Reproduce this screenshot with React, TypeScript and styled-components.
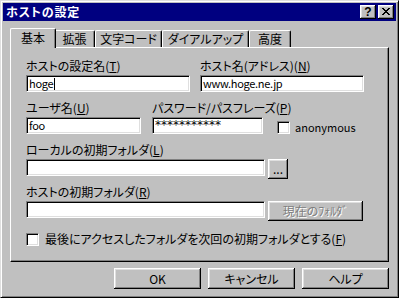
import React from 'react';
import styled, { createGlobalStyle } from 'styled-components';

const GlobalStyle = createGlobalStyle`
  html, body { margin: 0; padding: 0; background: #c0c0c0; }
  body {
    font-family: "Noto Sans CJK JP", "Noto Sans", sans-serif;
    font-size: 12px;
    font-feature-settings: "palt";
    color: #000;
  }
  * { box-sizing: border-box; }
`;

const Window = styled.div`
  width: 399px;
  height: 298px;
  background: #c0c0c0;
  border-top: 1px solid #dfdfdf;
  border-left: 1px solid #dfdfdf;
  border-right: 1px solid #000;
  border-bottom: 1px solid #000;
  box-shadow: inset 1px 1px #fff, inset -1px -1px #808080;
  padding: 2px;
  display: flex;
  flex-direction: column;
`;

const TitleBar = styled.div`
  height: 18px;
  background: #000080;
  display: flex;
  align-items: center;
  padding: 0 2px 0 2px;
`;

const TitleText = styled.div`
  flex: 1;
  color: #fff;
  font-weight: bold;
  font-size: 12px;
  line-height: 14px;
  padding-left: 1px;
  letter-spacing: 0.8px;
`;

const TitleButton = styled.div`
  width: 16px;
  height: 14px;
  margin-left: 2px;
  background: #c0c0c0;
  box-shadow: inset -1px -1px #000, inset 1px 1px #fff, inset -2px -2px #808080, inset 2px 2px #dfdfdf;
  display: flex;
  align-items: center;
  justify-content: center;
  font-family: "Liberation Sans", Arial, sans-serif;
  font-weight: bold;
  font-size: 12px;
  line-height: 12px;
  padding-bottom: 1px;
`;

const Body = styled.div`
  padding: 0 7px;
  display: flex;
  flex-direction: column;
`;

const TabStrip = styled.div`
  margin-top: 7px;
  height: 19px;
  display: flex;
  align-items: flex-end;
  padding-left: 2px;
`;

const Tab = styled.div<{ $w: number; $active?: boolean }>`
  width: ${(p) => (p.$active ? p.$w + 4 : p.$w)}px;
  height: ${(p) => (p.$active ? 20 : 17)}px;
  margin: ${(p) => (p.$active ? '0 -2px -1px -2px' : '0')};
  position: relative;
  z-index: ${(p) => (p.$active ? 2 : 1)};
  background: #c0c0c0;
  border-top: 1px solid #fff;
  border-left: 1px solid #fff;
  border-right: 1px solid #000;
  border-top-left-radius: 2px;
  border-top-right-radius: 2px;
  box-shadow: inset -1px 0 #808080;
  text-align: center;
  line-height: 14px;
  padding-top: ${(p) => (p.$active ? 2 : 1)}px;
  white-space: nowrap;
`;

const Panel = styled.div`
  height: 215px;
  border-top: 1px solid #fff;
  border-left: 1px solid #fff;
  border-right: 1px solid #000;
  border-bottom: 1px solid #000;
  box-shadow: inset -1px -1px #808080;
  padding: 11px 0 0 15px;
  display: flex;
  flex-direction: column;
`;

const Row = styled.div<{ $gap?: number }>`
  height: 42px;
  display: flex;
  gap: ${(p) => p.$gap ?? 0}px;
`;

const Field = styled.div<{ $w?: number }>`
  display: flex;
  flex-direction: column;
  ${(p) => (p.$w ? `width: ${p.$w}px;` : '')}
`;

const Label = styled.div`
  height: 14px;
  line-height: 14px;
  margin-bottom: 2px;
  white-space: nowrap;
`;

const Key = styled.span`
  text-decoration: underline;
  text-underline-offset: 1px;
`;

const Edit = styled.div<{ $w: number; $secret?: boolean }>`
  width: ${(p) => p.$w}px;
  height: 17px;
  background: #fff;
  border-top: 1px solid #808080;
  border-left: 1px solid #808080;
  border-right: 1px solid #fff;
  border-bottom: 1px solid #fff;
  box-shadow: inset 1px 1px #000, inset -1px -1px #dfdfdf;
  padding: 0 2px;
  line-height: 15px;
  white-space: nowrap;
  overflow: hidden;
  display: flex;
  align-items: center;
  font-family: ${(p) => (p.$secret ? '"DejaVu Sans", sans-serif' : '"Noto Sans CJK JP", sans-serif')};
  font-size: ${(p) => (p.$secret ? 12 : 11)}px;
  letter-spacing: ${(p) => (p.$secret ? 0 : -0.3)}px;
`;

const Caret = styled.span`
  display: inline-block;
  width: 1px;
  height: 12px;
  background: #000;
  margin-left: 1px;
`;

const Inline = styled.div`
  display: flex;
  align-items: flex-start;
  gap: 3px;
`;

const Button = styled.div<{ $w: number; $h?: number; $disabled?: boolean }>`
  width: ${(p) => p.$w}px;
  height: ${(p) => p.$h ?? 21}px;
  background: #c0c0c0;
  box-shadow: inset -1px -1px #000, inset 1px 1px #fff, inset -2px -2px #808080, inset 2px 2px #dfdfdf;
  display: flex;
  align-items: center;
  justify-content: center;
  white-space: nowrap;
  line-height: 14px;
  color: ${(p) => (p.$disabled ? '#808080' : '#000')};
  text-shadow: ${(p) => (p.$disabled ? '1px 1px #fff' : 'none')};
`;

const CheckBox = styled.div`
  width: 13px;
  height: 13px;
  background: #fff;
  border-top: 1px solid #808080;
  border-left: 1px solid #808080;
  border-right: 1px solid #fff;
  border-bottom: 1px solid #fff;
  box-shadow: inset 1px 1px #000, inset -1px -1px #dfdfdf;
  flex: none;
`;

const AnonOption = styled.div`
  align-self: flex-start;
  margin: 20px 0 0 3px;
  display: flex;
  align-items: center;
  gap: 5px;
  line-height: 13px;
  font-size: 11px;
`;

const CheckRow = styled.div`
  margin-top: 5px;
  display: flex;
  align-items: center;
  gap: 6px;
  line-height: 14px;
  white-space: nowrap;
`;

const ButtonRow = styled.div`
  margin-top: 6px;
  display: flex;
  justify-content: flex-end;
  gap: 7px;
  padding-right: 0;
`;

const CloseGlyph = () => (
  <svg width="8" height="7" viewBox="0 0 8 7" shapeRendering="crispEdges">
    <path
      d="M0 0h2v1H0zM6 0h2v1H6zM1 1h2v1H1zM5 1h2v1H5zM2 2h4v1H2zM3 3h2v1H3zM2 4h4v1H2zM1 5h2v1H1zM5 5h2v1H5zM0 6h2v1H0zM6 6h2v1H6z"
      fill="#000"
    />
  </svg>
);

export default function App() {
  return (
    <>
      <GlobalStyle />
      <Window>
        <TitleBar>
          <TitleText>ホストの設定</TitleText>
          <TitleButton>?</TitleButton>
          <TitleButton>
            <CloseGlyph />
          </TitleButton>
        </TitleBar>
        <Body>
          <TabStrip>
            <Tab $w={42} $active>基本</Tab>
            <Tab $w={41}>拡張</Tab>
            <Tab $w={67}>文字コード</Tab>
            <Tab $w={87}>ダイアルアップ</Tab>
            <Tab $w={42}>高度</Tab>
          </TabStrip>
          <Panel>
            <Row $gap={10}>
              <Field $w={164}>
                <Label>
                  ホストの設定名(<Key>T</Key>)
                </Label>
                <Edit $w={164}>
                  hoge
                  <Caret />
                </Edit>
              </Field>
              <Field $w={164}>
                <Label>
                  ホスト名(アドレス)(<Key>N</Key>)
                </Label>
                <Edit $w={164}>www.hoge.ne.jp</Edit>
              </Field>
            </Row>
            <Row $gap={11}>
              <Field $w={115}>
                <Label>
                  ユーザ名(<Key>U</Key>)
                </Label>
                <Edit $w={115}>foo</Edit>
              </Field>
              <Field $w={111}>
                <Label>
                  パスワード/パスフレーズ(<Key>P</Key>)
                </Label>
                <Edit $w={111} $secret>***********</Edit>
              </Field>
              <AnonOption>
                <CheckBox />
                <span>anonymous</span>
              </AnonOption>
            </Row>
            <Row>
              <Field>
                <Label>
                  ローカルの初期フォルダ(<Key>L</Key>)
                </Label>
                <Inline>
                  <Edit $w={239} />
                  <Button $w={20} $h={20}>...</Button>
                </Inline>
              </Field>
            </Row>
            <Row>
              <Field>
                <Label>
                  ホストの初期フォルダ(<Key>R</Key>)
                </Label>
                <Inline>
                  <Edit $w={239} />
                  <Button $w={95} $h={20} $disabled>
                    現在のﾌｫﾙﾀﾞ
                  </Button>
                </Inline>
              </Field>
            </Row>
            <CheckRow>
              <CheckBox />
              <span>
                最後にアクセスしたフォルダを次回の初期フォルダとする(<Key>F</Key>)
              </span>
            </CheckRow>
          </Panel>
          <ButtonRow>
            <Button $w={87}>OK</Button>
            <Button $w={87}>キャンセル</Button>
            <Button $w={87}>ヘルプ</Button>
          </ButtonRow>
        </Body>
      </Window>
    </>
  );
}
